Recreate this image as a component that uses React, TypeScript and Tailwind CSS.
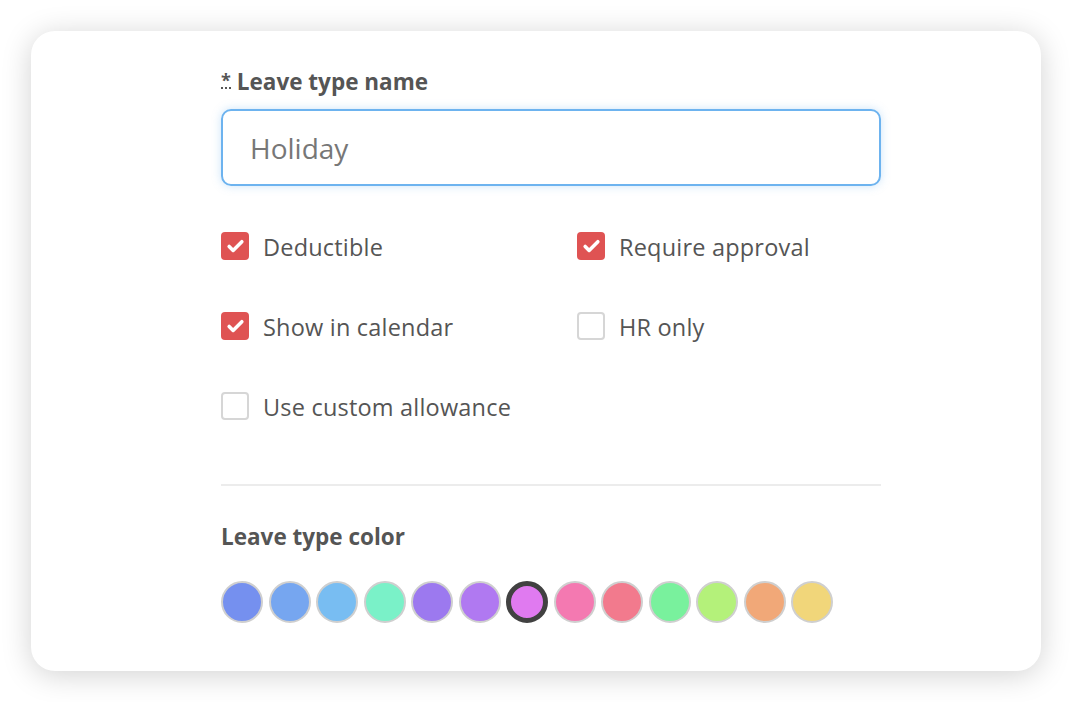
import { Check } from 'lucide-react';

const colors = [
    '#7590ef',
    '#76a6f0',
    '#78bdf2',
    '#7af1c8',
    '#9c79ef',
    '#b079f1',
    '#e07af0',
    '#f479b1',
    '#f27a8d',
    '#79f19d',
    '#b4f17a',
    '#f1a878',
    '#f1d67a',
];

function Checkbox({ checked, label }: { checked: boolean; label: string }) {
    return (
        <label className="flex items-center gap-[14px] h-[30px]">
            {checked ? (
                <span className="w-[28px] h-[28px] rounded-[4px] bg-[#df5353] flex items-center justify-center">
                    <Check className="w-[19px] h-[19px] text-white" strokeWidth={4.5} />
                </span>
            ) : (
                <span className="w-[28px] h-[28px] rounded-[4px] border-2 border-[#d6d6d6] bg-white" />
            )}
            <span className="text-[23.5px] text-[#555555] tracking-[0.2px] mt-[3px]">{label}</span>
        </label>
    );
}

export default function App() {
    return (
        <div className="w-[1072px] h-[702px] bg-white p-[31px] font-['Open_Sans',sans-serif]">
            <div className="w-[1010px] h-[640px] rounded-[24px] bg-white shadow-[0_4px_30px_rgba(0,0,0,0.18)] pl-[190px] pt-[37px]">
                <div className="w-[660px]">
                    {/* Name */}
                    <div className="flex items-center gap-[6px] text-[22.5px] font-bold text-[#555555] h-[28px]">
                        <abbr className="no-underline border-b-2 border-dotted border-[#555555] leading-[14px] text-[18px] mt-[-2px]">*</abbr>
                        <span>Leave type name</span>
                    </div>
                    <div className="mt-[13px] h-[77px] rounded-[10px] border-2 border-[#6db3ef] shadow-[0_0_10px_rgba(109,179,239,0.35)] flex items-center px-[27px]">
                        <span className="text-[28px] text-[#777777]">Holiday</span>
                    </div>

                    {/* Options */}
                    <div className="mt-[45px] grid grid-cols-[356px_1fr] gap-y-[50px] w-[660px]">
                        <Checkbox checked label="Deductible" />
                        <Checkbox checked label="Require approval" />
                        <Checkbox checked label="Show in calendar" />
                        <Checkbox checked={false} label="HR only" />
                        <Checkbox checked={false} label="Use custom allowance" />
                    </div>

                    <div className="mt-[63px] h-[2px] bg-[#ececec]" />

                    {/* Color */}
                    <div className="mt-[37px] text-[22.5px] font-bold text-[#555555] h-[28px] flex items-center">
                        Leave type color
                    </div>
                    <div className="mt-[30px] flex gap-[5.5px]">
                        {colors.map((c, idx) => (
                            <span
                                key={c}
                                className={
                                    idx === 6
                                        ? 'w-[42px] h-[42px] rounded-full border-[5px] border-[#414141]'
                                        : 'w-[42px] h-[42px] rounded-full border-2 border-[#cfcfcf]'
                                }
                                style={{ backgroundColor: c }}
                            />
                        ))}
                    </div>
                </div>
            </div>
        </div>
    );
}
